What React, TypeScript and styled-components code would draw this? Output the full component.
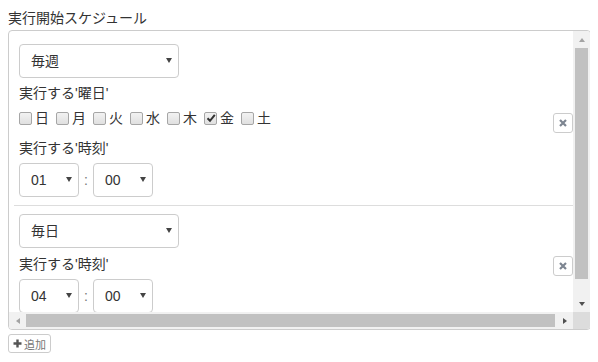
import React from "react";
import styled, { createGlobalStyle } from "styled-components";

const GlobalStyle = createGlobalStyle`
  body {
    margin: 8px;
    font-family: "Liberation Sans", "Noto Sans CJK JP", sans-serif;
    font-size: 14px;
    color: #333;
    background: #fff;
  }
`;

const Title = styled.div`
  line-height: 20px;
  margin-bottom: 2px;
`;

// bordered frame: viewport + scrollbars laid out on a grid
const ScrollBox = styled.div`
  display: grid;
  grid-template-columns: 564px 17px;
  grid-template-rows: 281px 17px;
  width: max-content;
  border: 1px solid #ccc;
  border-radius: 4px;
  overflow: hidden;
`;

const Viewport = styled.div`
  overflow: hidden;
`;

const Bar = styled.div<{ $vertical?: boolean }>`
  display: flex;
  flex-direction: ${(p) => (p.$vertical ? "column" : "row")};
  background: #f1f1f1;
`;

const Track = styled.div<{ $vertical?: boolean }>`
  flex: 1;
  display: flex;
  flex-direction: ${(p) => (p.$vertical ? "column" : "row")};
  padding: ${(p) => (p.$vertical ? "0 2px" : "2px 0")};
`;

const Thumb = styled.div<{ $vertical?: boolean; $size: number }>`
  background: #c1c1c1;
  ${(p) => (p.$vertical ? `height: ${p.$size}px;` : `width: ${p.$size}px;`)}
`;

type Dir = "up" | "down" | "left" | "right";

const triangle: Record<Dir, string> = {
  up: "border-width: 0 3.5px 4px; border-color: transparent transparent currentColor;",
  down: "border-width: 4px 3.5px 0; border-color: currentColor transparent transparent;",
  left: "border-width: 3.5px 4px 3.5px 0; border-color: transparent currentColor transparent transparent;",
  right: "border-width: 3.5px 0 3.5px 4px; border-color: transparent transparent transparent currentColor;",
};

const ArrowBtn = styled.div<{ $dir: Dir; $disabled?: boolean }>`
  width: 17px;
  height: 17px;
  flex: none;
  display: flex;
  align-items: center;
  justify-content: center;
  color: ${(p) => (p.$disabled ? "#a3a3a3" : "#505050")};

  &::after {
    content: "";
    border-style: solid;
    ${(p) => triangle[p.$dir]}
  }
`;

const Corner = styled.div`
  background: #dcdcdc;
`;

const List = styled.div`
  width: 566px;
  box-sizing: border-box;
  padding: 4px 2px 10px 5px;
`;

const Item = styled.div`
  display: flex;
  justify-content: space-between;
  align-items: center;
  padding: 9px 0 8px 5px;

  & + & {
    border-top: 1px solid #ddd;
    padding-top: 8px;
  }
`;

const Fields = styled.div`
  display: flex;
  flex-direction: column;
`;

const SelectWrap = styled.div<{ $width: number }>`
  position: relative;
  width: ${(p) => p.$width}px;

  &::after {
    content: "";
    position: absolute;
    right: 7px;
    top: 14px;
    border-style: solid;
    border-width: 5px 3.5px 0;
    border-color: #444 transparent transparent;
    pointer-events: none;
  }
`;

const Select = styled.select`
  appearance: none;
  width: 100%;
  height: 34px;
  box-sizing: border-box;
  border: 1px solid #ccc;
  border-radius: 4px;
  background: #fff;
  padding: 0 0 0 11px;
  font: inherit;
  color: #333;
  outline: none;
`;

const FieldLabel = styled.div<{ $top: number }>`
  line-height: 20px;
  margin-top: ${(p) => p.$top}px;
`;

const DayRow = styled.div`
  display: flex;
  height: 20px;
  align-items: center;
  margin-top: 5px;
`;

const Day = styled.label`
  display: flex;
  align-items: center;
  margin-right: 7px;
  line-height: 20px;
`;

const Box = styled.span`
  display: inline-flex;
  align-items: center;
  justify-content: center;
  width: 13px;
  height: 13px;
  box-sizing: border-box;
  border: 1px solid #a6a6a6;
  border-radius: 2px;
  background: linear-gradient(#f2f2f2, #e0e0e0);
  margin-right: 3px;
`;

const TimeRow = styled.div`
  display: flex;
  align-items: center;
  margin-top: 5px;
`;

const Colon = styled.span`
  width: 14px;
  text-align: center;
  color: #777;
`;

const RemoveButton = styled.button`
  width: 20px;
  height: 20px;
  padding: 0;
  display: flex;
  align-items: center;
  justify-content: center;
  border: 1px solid #ccc;
  border-radius: 3px;
  background: #fff;
  margin-top: 4px;
`;

const AddButton = styled.button`
  display: inline-flex;
  align-items: center;
  gap: 2px;
  height: 19px;
  margin-top: 4px;
  padding: 0 4px;
  border: 1px solid #ccc;
  border-radius: 3px;
  background: #fff;
  font-family: inherit;
  font-size: 11px;
  color: #777;
`;

const days = ["日", "月", "火", "水", "木", "金", "土"];

const Check = () => (
  <svg width="10" height="10" viewBox="0 0 10 10">
    <path d="M1.5 5.2 L4 7.8 L8.8 1.8" fill="none" stroke="#333" strokeWidth="2" />
  </svg>
);

const Cross = () => (
  <svg width="8" height="8" viewBox="0 0 8 8">
    <path d="M1 1 L7 7 M7 1 L1 7" stroke="#7d8591" strokeWidth="2.2" />
  </svg>
);

const Plus = () => (
  <svg width="9" height="9" viewBox="0 0 9 9">
    <path d="M4.5 0.5 V8.5 M0.5 4.5 H8.5" stroke="#555" strokeWidth="2.4" />
  </svg>
);

function TimeSelect({ hour }: { hour: string }) {
  return (
    <TimeRow>
      <SelectWrap $width={60}>
        <Select defaultValue={hour}>
          <option>{hour}</option>
        </Select>
      </SelectWrap>
      <Colon>:</Colon>
      <SelectWrap $width={60}>
        <Select defaultValue="00">
          <option>00</option>
        </Select>
      </SelectWrap>
    </TimeRow>
  );
}

export default function App() {
  return (
    <>
      <GlobalStyle />
      <Title>実行開始スケジュール</Title>
      <ScrollBox>
        <Viewport>
          <List>
            <Item>
              <Fields>
                <SelectWrap $width={160}>
                  <Select defaultValue="毎週">
                    <option>毎週</option>
                  </Select>
                </SelectWrap>
                <FieldLabel $top={5}>実行する'曜日'</FieldLabel>
                <DayRow>
                  {days.map((d) => (
                    <Day key={d}>
                      <Box>{d === "金" && <Check />}</Box>
                      {d}
                    </Day>
                  ))}
                </DayRow>
                <FieldLabel $top={10}>実行する'時刻'</FieldLabel>
                <TimeSelect hour="01" />
              </Fields>
              <RemoveButton>
                <Cross />
              </RemoveButton>
            </Item>
            <Item>
              <Fields>
                <SelectWrap $width={160}>
                  <Select defaultValue="毎日">
                    <option>毎日</option>
                  </Select>
                </SelectWrap>
                <FieldLabel $top={6}>実行する'時刻'</FieldLabel>
                <TimeSelect hour="04" />
              </Fields>
              <RemoveButton>
                <Cross />
              </RemoveButton>
            </Item>
          </List>
        </Viewport>
        <Bar $vertical>
          <ArrowBtn $dir="up" $disabled />
          <Track $vertical>
            <Thumb $vertical $size={231} />
          </Track>
          <ArrowBtn $dir="down" />
        </Bar>
        <Bar>
          <ArrowBtn $dir="left" $disabled />
          <Track>
            <Thumb $size={529} />
          </Track>
          <ArrowBtn $dir="right" />
        </Bar>
        <Corner />
      </ScrollBox>
      <AddButton>
        <Plus />
        追加
      </AddButton>
    </>
  );
}
